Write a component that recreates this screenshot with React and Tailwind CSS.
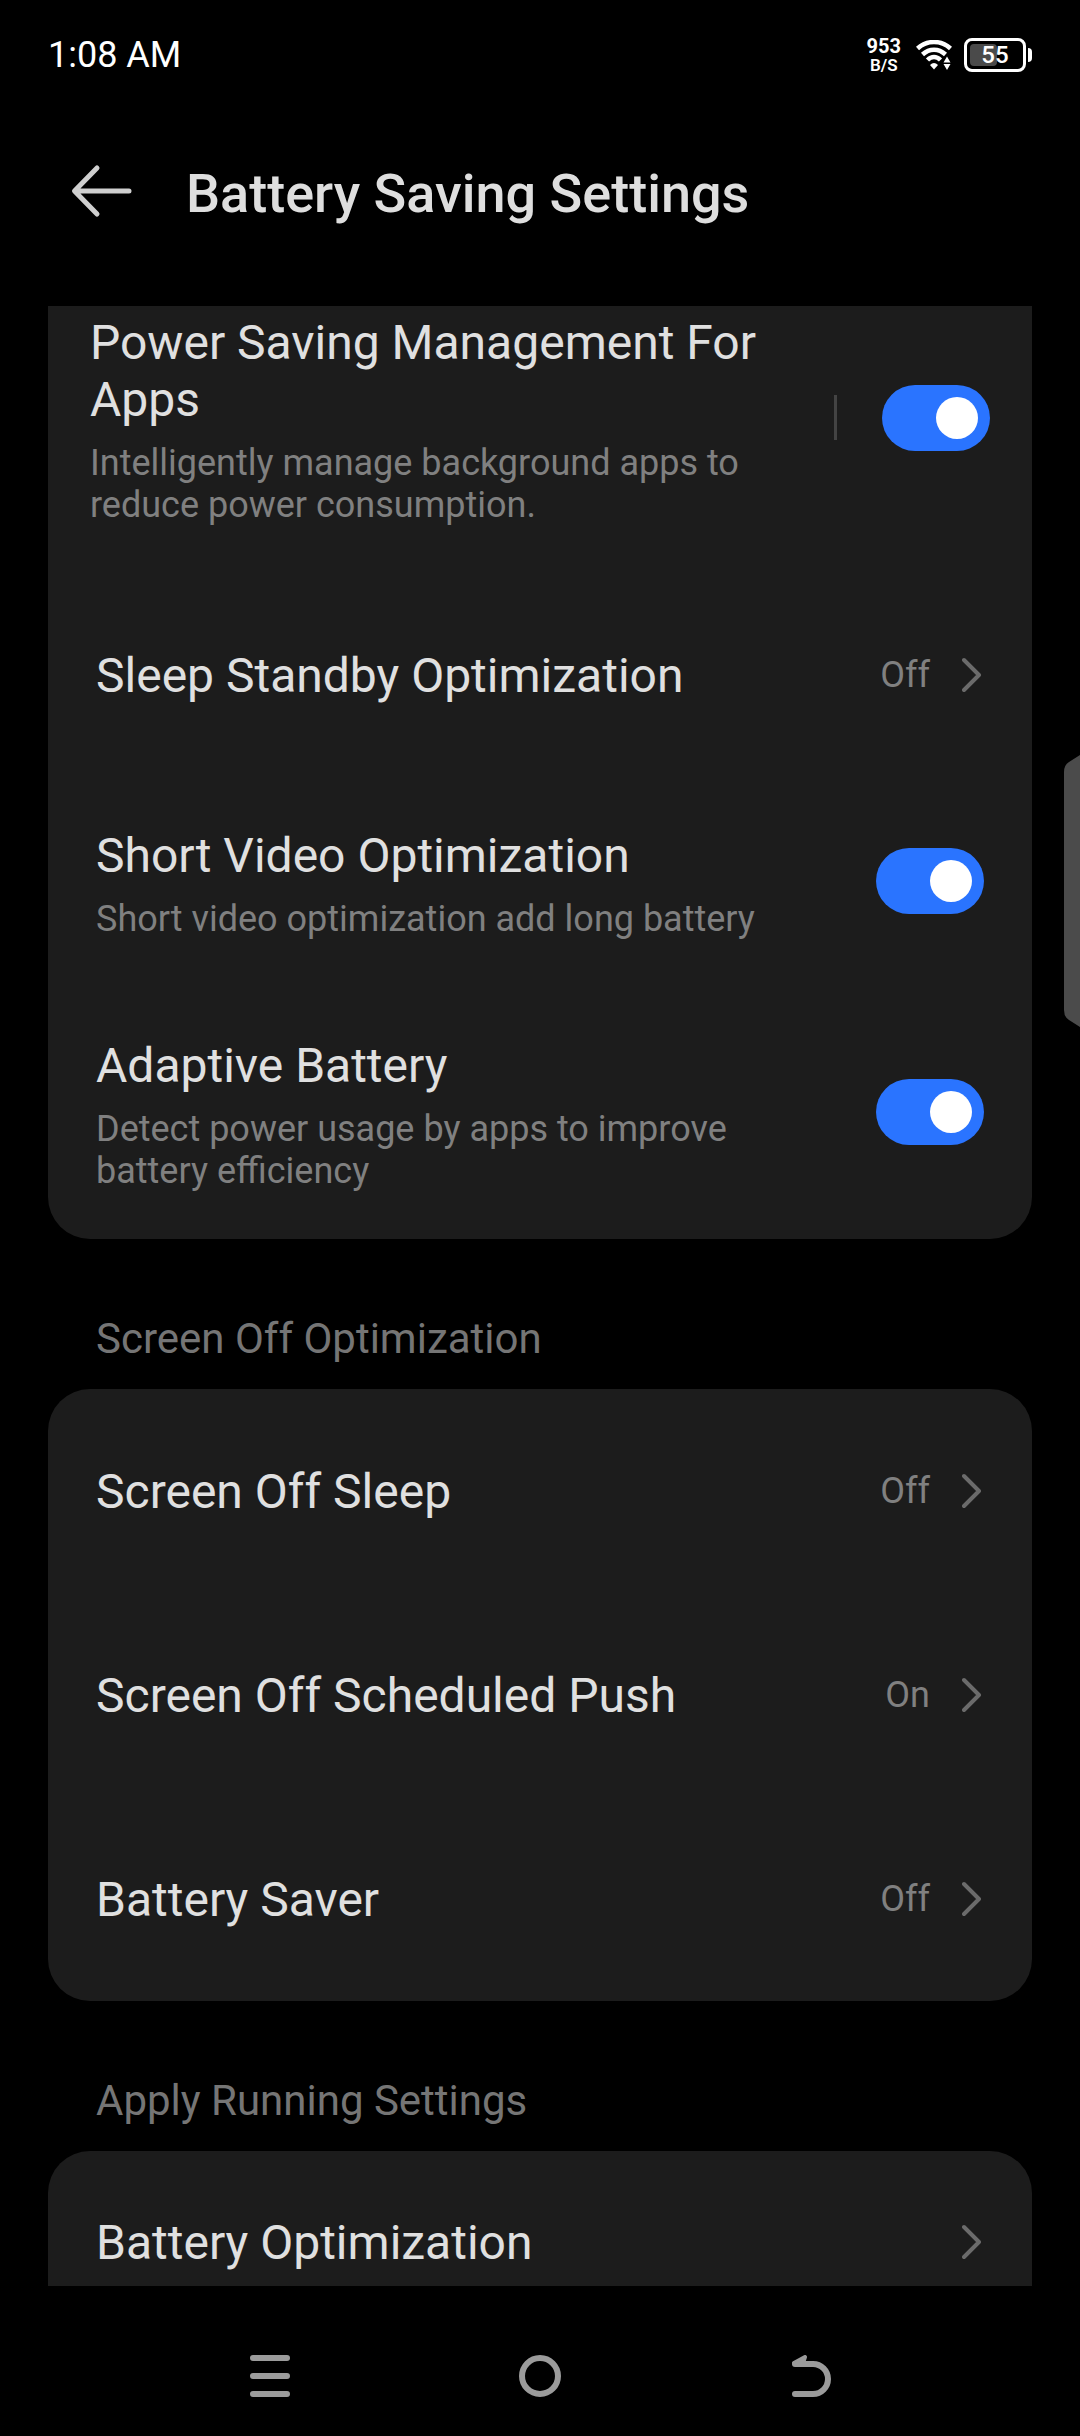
import React, { useState } from 'react';

const Chevron = () => (
  <svg width="22" height="36" viewBox="0 0 22 36" fill="none" stroke="#6b6b6b" strokeWidth="4" strokeLinecap="round" strokeLinejoin="round" aria-hidden="true">
    <path d="M2 3 L17 18 L2 33" />
  </svg>
);

const WifiIcon = () => (
  <svg width="36" height="30" viewBox="0 0 36 30" fill="none" stroke="#fff" strokeWidth="4.5" aria-hidden="true">
    <path d="M1.5 8.5 C11 -0.2 25 -0.2 34.5 8.5" />
    <path d="M6.5 14.500 C13.500 8 22.500 8 29.500 14.500" />
    <path d="M11.500 20 C15.500 16 20.500 16 24.500 20" />
    <path d="M14 25 Q18 21 22 25 L18 29.500 Z" fill="#fff" stroke="none" />
    <path d="M31 16.500 L34.500 22.500 H27.500 Z M27.500 24 H34.500 L31 30 Z" fill="#fff" stroke="none" />
  </svg>
);

const StatusBar = () => (
  <div className="flex h-[110px] items-center justify-between px-12 text-white">
    <span className="text-[36px] leading-[42px]">1:08 AM</span>
    <div className="flex items-center">
      <div className="flex flex-col items-center">
        <span className="text-[20px] leading-[20px] font-bold">953</span>
        <span className="text-[17px] leading-[18px] font-semibold">B/S</span>
      </div>
      <div className="ml-[15px]">
        <WifiIcon />
      </div>
      <div className="ml-3 flex items-center gap-[2px]">
        <div className="relative flex h-[34px] w-[62px] items-center justify-center rounded-lg border-[3px] border-white">
          <span className="absolute top-[3px] bottom-[3px] left-[3px] w-[27px] rounded-sm bg-[#4a4a4a]" />
          <span className="relative text-[24px] leading-[28px] font-medium">55</span>
        </div>
        <span className="h-[14px] w-1 rounded-r bg-white" />
      </div>
    </div>
  </div>
);

const Header = () => (
  <header className="flex h-[196px] items-start pt-[52px] pl-[66px]">
    <button type="button" aria-label="Back" className="mt-[2px] mr-[48px]">
      <svg width="72" height="54" viewBox="0 0 72 54" fill="none" stroke="#cfcfcf" strokeWidth="5" strokeLinecap="round" strokeLinejoin="round">
        <path d="M63 27 H9 M31 4 L8.500 27 L31 50" />
      </svg>
    </button>
    <h1 className="text-[54px] leading-[64px] font-medium text-[#dedede]">Battery Saving Settings</h1>
  </header>
);

const Toggle = ({ label }) => {
  const [on, setOn] = useState(true);
  return (
    <label className="relative block h-[66px] w-[108px] shrink-0">
      <input
        type="checkbox"
        role="switch"
        aria-label={label}
        checked={on}
        onChange={() => setOn(!on)}
        className="peer absolute inset-0 h-full w-full appearance-none rounded-full bg-[#4a4a4a] checked:bg-[#2a74ff]"
      />
      <span className="pointer-events-none absolute top-3 left-3 h-[42px] w-[42px] rounded-full bg-white peer-checked:left-[54px]" />
    </label>
  );
};

const SwitchRow = ({ title, description, divided }) => (
  <div className={divided ? 'flex items-center px-[42px]' : 'flex items-center px-12'}>
    <div className="max-w-[680px] flex-1 pt-[50px] pb-[47px]">
      <p className="text-[48px] leading-[57px] text-[#e0e0e0]">{title}</p>
      <p className="mt-[14px] text-[36px] leading-[42px] text-[#808080]">{description}</p>
    </div>
    <div className="ml-auto flex items-center pb-[2px]">
      {divided && <span className="mr-[45px] h-[45px] w-[3px] bg-[#434343]" />}
      <Toggle label={title} />
    </div>
  </div>
);

const LinkRow = ({ title, value, compact }) => (
  <a href="#" className={compact ? 'flex h-[182px] items-center px-12' : 'flex h-[204px] items-center px-12'}>
    <span className="flex-1 text-[48px] leading-[57px] text-[#e0e0e0]">{title}</span>
    {value && <span className="mr-8 text-[36px] leading-[42px] text-[#808080]">{value}</span>}
    <Chevron />
  </a>
);

const Card = ({ children }) => (
  <div className="overflow-hidden rounded-[42px] bg-[#1c1c1c]">{children}</div>
);

const SectionTitle = ({ children }) => (
  <h2 className="px-12 pt-[75px] pb-[26px] text-[42px] leading-[49px] text-[#757575]">{children}</h2>
);

const NavBar = () => (
  <nav className="grid h-[150px] shrink-0 grid-cols-3 px-[12.5%] pt-[30px]">
    <button type="button" aria-label="Recent apps" className="flex items-center justify-center">
      <svg width="42" height="42" viewBox="0 0 42 42" stroke="#9b9b9b" strokeWidth="6" strokeLinecap="round">
        <path d="M4 3 H38 M4 21 H38 M4 39 H38" />
      </svg>
    </button>
    <button type="button" aria-label="Home" className="flex items-center justify-center">
      <svg width="42" height="42" viewBox="0 0 42 42" fill="none" stroke="#9b9b9b" strokeWidth="6">
        <circle cx="21" cy="21" r="18" />
      </svg>
    </button>
    <button type="button" aria-label="Back" className="flex items-center justify-center">
      <svg width="42" height="42" viewBox="0 0 42 42" fill="none" stroke="#9b9b9b" strokeWidth="6" strokeLinecap="round" strokeLinejoin="round">
        <path d="M6 9 H24 A15 15 0 0 1 24 39 H6" />
        <path d="M5 8 L16 2 L15 5 L11 8 Z" fill="#9b9b9b" strokeWidth="4" />
      </svg>
    </button>
  </nav>
);

const App = () => {
  return (
    <div className="relative flex h-screen flex-col overflow-hidden bg-black font-['Roboto',sans-serif]">
      <StatusBar />
      <Header />

      {/* List is scrolled slightly, so the first card runs under the header */}
      <main className="min-h-0 flex-1 overflow-hidden px-12">
        <div className="-mt-[42px]">
          <Card>
            <SwitchRow
              divided
              title="Power Saving Management For Apps"
              description="Intelligently manage background apps to reduce power consumption."
            />
            <LinkRow title="Sleep Standby Optimization" value="Off" />
            <SwitchRow title="Short Video Optimization" description="Short video optimization add long battery" />
            <SwitchRow title="Adaptive Battery" description="Detect power usage by apps to improve battery efficiency" />
          </Card>

          <SectionTitle>Screen Off Optimization</SectionTitle>
          <Card>
            <LinkRow title="Screen Off Sleep" value="Off" />
            <LinkRow title="Screen Off Scheduled Push" value="On" />
            <LinkRow title="Battery Saver" value="Off" />
          </Card>

          <SectionTitle>Apply Running Settings</SectionTitle>
          <Card>
            <LinkRow compact title="Battery Optimization" />
          </Card>
        </div>
      </main>

      <NavBar />

      {/* Edge panel handle */}
      <svg className="absolute top-[755px] right-0" width="16" height="272" viewBox="0 0 16 272" fill="#4b4b4b" aria-hidden="true">
        <path d="M16 0 L5 7 Q0 10 0 17 V255 Q0 262 5 265 L16 272 Z" />
      </svg>
    </div>
  );
};

export default App;
